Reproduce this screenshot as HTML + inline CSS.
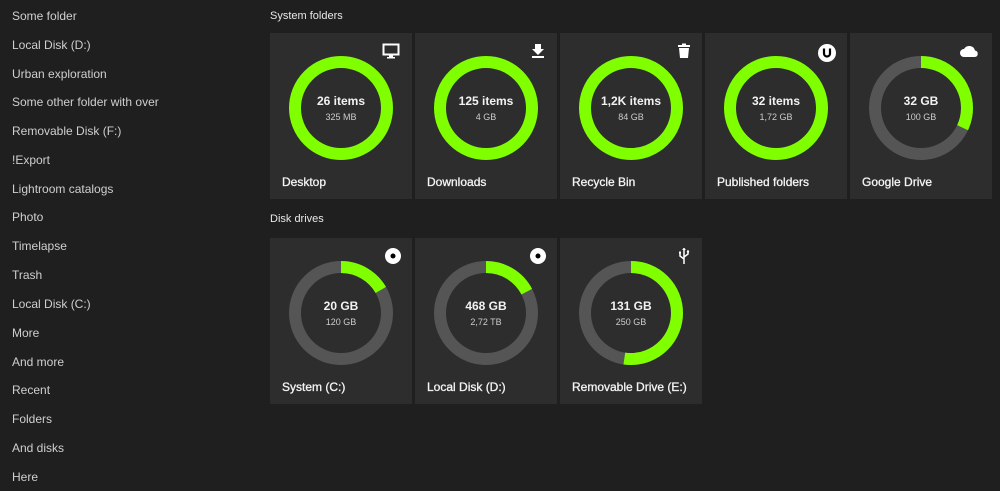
<!DOCTYPE html>
<html><head><meta charset="utf-8"><style>
body{margin:0;width:1000px;height:491px;background:#1f1f1f;font-family:"Liberation Sans",sans-serif;overflow:hidden;position:relative;color:#fff}
.side div{position:absolute;left:12px;font-size:12px;color:#cfcfcf}
.h{position:absolute;font-size:11px;color:#e8e8e8}
.t{position:absolute;width:142px;height:166px;background:#2d2d2d}
.t svg.r{position:absolute;left:19px;top:23px}
.t .a{position:absolute;left:0;width:142px;text-align:center;top:61px;font-size:12px;font-weight:bold;color:#f2f2f2}
.t .b{position:absolute;left:0;width:142px;text-align:center;top:79px;font-size:9px;color:#ccc}
.t .n{position:absolute;left:12px;top:142px;font-size:12px;color:#f4f4f4;-webkit-text-stroke:0.3px #f4f4f4}
.t .i{position:absolute;right:12px;top:10px}
</style></head><body>
<div class="side">
<div style="top:9px">Some folder</div><div style="top:38px">Local Disk (D:)</div><div style="top:67px">Urban exploration</div><div style="top:95px">Some other folder with over</div><div style="top:124px">Removable Disk (F:)</div><div style="top:153px">!Export</div><div style="top:182px">Lightroom catalogs</div><div style="top:210px">Photo</div><div style="top:239px">Timelapse</div><div style="top:268px">Trash</div><div style="top:297px">Local Disk (C:)</div><div style="top:326px">More</div><div style="top:355px">And more</div><div style="top:383px">Recent</div><div style="top:412px">Folders</div><div style="top:441px">And disks</div><div style="top:470px">Here</div>
</div>
<div class="h" style="left:270px;top:10px">System folders</div>
<div class="h" style="left:270px;top:213px">Disk drives</div>

<div class="t" style="left:270px;top:33px"><svg class="r" width="104" height="104"><circle cx="52" cy="52" r="46" fill="none" stroke="#80ff00" stroke-width="12"/></svg><div class="a">26 items</div><div class="b">325 MB</div><div class="n">Desktop</div>
<svg class="i" width="18" height="16" viewBox="0 0 18 16"><rect x="1.5" y="1.5" width="15" height="10" fill="none" stroke="#fff" stroke-width="2"/><rect x="7" y="12" width="4" height="2" fill="#fff"/><rect x="5" y="14" width="8" height="1.5" fill="#fff"/></svg></div>

<div class="t" style="left:415px;top:33px"><svg class="r" width="104" height="104"><circle cx="52" cy="52" r="46" fill="none" stroke="#80ff00" stroke-width="12"/></svg><div class="a">125 items</div><div class="b">4 GB</div><div class="n">Downloads</div>
<svg class="i" width="14" height="16" viewBox="0 0 14 16"><path d="M4 1h6v5h3l-6 6-6-6h3z" fill="#fff"/><rect x="1" y="13" width="12" height="2" fill="#fff"/></svg></div>

<div class="t" style="left:560px;top:33px"><svg class="r" width="104" height="104"><circle cx="52" cy="52" r="46" fill="none" stroke="#80ff00" stroke-width="12"/></svg><div class="a">1,2K items</div><div class="b">84 GB</div><div class="n">Recycle Bin</div>
<svg class="i" width="12" height="16" viewBox="0 0 12 16"><rect x="0" y="2" width="12" height="2" fill="#fff"/><rect x="4" y="0.5" width="4" height="2" fill="#fff"/><path d="M1 5h10l-1 10H2z" fill="#fff"/></svg></div>

<div class="t" style="left:705px;top:33px"><svg class="r" width="104" height="104"><circle cx="52" cy="52" r="46" fill="none" stroke="#80ff00" stroke-width="12"/></svg><div class="a">32 items</div><div class="b">1,72 GB</div><div class="n">Published folders</div>
<svg class="i" width="18" height="18" viewBox="0 0 18 18" style="top:11px;right:11px"><circle cx="9" cy="9" r="9" fill="#fff"/><path d="M6 4.5v5a3 3 0 0 0 6 0v-5" fill="none" stroke="#000" stroke-width="2.2"/></svg></div>

<div class="t" style="left:850px;top:33px"><svg class="r" width="104" height="104" style="transform:rotate(-90deg)"><circle cx="52" cy="52" r="46" fill="none" stroke="#555" stroke-width="12"/><circle cx="52" cy="52" r="46" fill="none" stroke="#80ff00" stroke-width="12" stroke-dasharray="92.5 300"/></svg><div class="a">32 GB</div><div class="b">100 GB</div><div class="n">Google Drive</div>
<svg class="i" width="20" height="14" viewBox="0 0 20 14" style="right:13px;top:11px"><path d="M5 13a4 4 0 0 1 0-8 6 6 0 0 1 11 1.5 3.3 3.3 0 0 1 0 6.5z" fill="#fff"/></svg></div>

<div class="t" style="left:270px;top:238px"><svg class="r" width="104" height="104" style="transform:rotate(-90deg)"><circle cx="52" cy="52" r="46" fill="none" stroke="#555" stroke-width="12"/><circle cx="52" cy="52" r="46" fill="none" stroke="#80ff00" stroke-width="12" stroke-dasharray="48 300"/></svg><div class="a">20 GB</div><div class="b">120 GB</div><div class="n">System (C:)</div>
<svg class="i" width="16" height="16" viewBox="0 0 16 16" style="right:11px;top:10px"><circle cx="8" cy="8" r="8" fill="#fff"/><circle cx="8" cy="8" r="2.5" fill="#000"/></svg></div>

<div class="t" style="left:415px;top:238px"><svg class="r" width="104" height="104" style="transform:rotate(-90deg)"><circle cx="52" cy="52" r="46" fill="none" stroke="#555" stroke-width="12"/><circle cx="52" cy="52" r="46" fill="none" stroke="#80ff00" stroke-width="12" stroke-dasharray="50 300"/></svg><div class="a">468 GB</div><div class="b">2,72 TB</div><div class="n">Local Disk (D:)</div>
<svg class="i" width="16" height="16" viewBox="0 0 16 16" style="right:11px;top:10px"><circle cx="8" cy="8" r="8" fill="#fff"/><circle cx="8" cy="8" r="2.5" fill="#000"/></svg></div>

<div class="t" style="left:560px;top:238px"><svg class="r" width="104" height="104" style="transform:rotate(-90deg)"><circle cx="52" cy="52" r="46" fill="none" stroke="#555" stroke-width="12"/><circle cx="52" cy="52" r="46" fill="none" stroke="#80ff00" stroke-width="12" stroke-dasharray="151 300"/></svg><div class="a">131 GB</div><div class="b">250 GB</div><div class="n">Removable Drive (E:)</div>
<svg class="i" width="12" height="18" viewBox="0 0 12 18" style="right:12px;top:9px"><path d="M6 1v16M6 12L2 9V6M6 10l4-3V5" fill="none" stroke="#fff" stroke-width="1.5"/><path d="M4 3l2-2 2 2z" fill="#fff"/><rect x="1" y="4.5" width="2" height="2" fill="#fff"/><circle cx="10" cy="4.5" r="1.2" fill="#fff"/></svg></div>
</body></html>
